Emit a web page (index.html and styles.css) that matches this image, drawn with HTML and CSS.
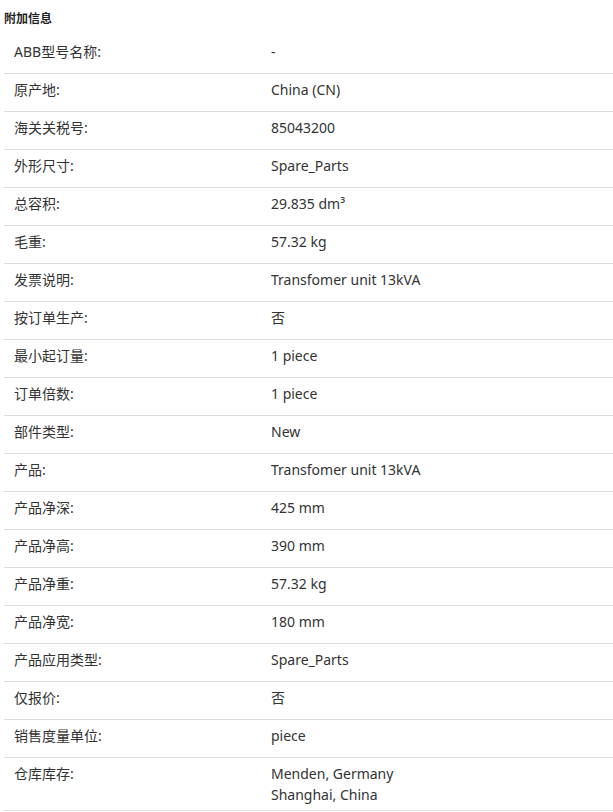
FILE: index.html
```html
<!DOCTYPE html>
<html lang="zh">
<head>
<meta charset="utf-8">
<title>附加信息</title>
<link rel="stylesheet" href="styles.css">
</head>
<body>
<div class="panel">
  <div class="heading">附加信息</div>
  <div class="table">
    <div class="row"><div class="label">ABB型号名称:</div><div class="value">-</div></div>
    <div class="row"><div class="label">原产地:</div><div class="value">China (CN)</div></div>
    <div class="row"><div class="label">海关关税号:</div><div class="value">85043200</div></div>
    <div class="row"><div class="label">外形尺寸:</div><div class="value">Spare_Parts</div></div>
    <div class="row"><div class="label">总容积:</div><div class="value">29.835 dm³</div></div>
    <div class="row"><div class="label">毛重:</div><div class="value">57.32 kg</div></div>
    <div class="row"><div class="label">发票说明:</div><div class="value">Transfomer unit 13kVA</div></div>
    <div class="row"><div class="label">按订单生产:</div><div class="value">否</div></div>
    <div class="row"><div class="label">最小起订量:</div><div class="value">1 piece</div></div>
    <div class="row"><div class="label">订单倍数:</div><div class="value">1 piece</div></div>
    <div class="row"><div class="label">部件类型:</div><div class="value">New</div></div>
    <div class="row"><div class="label">产品:</div><div class="value">Transfomer unit 13kVA</div></div>
    <div class="row"><div class="label">产品净深:</div><div class="value">425 mm</div></div>
    <div class="row"><div class="label">产品净高:</div><div class="value">390 mm</div></div>
    <div class="row"><div class="label">产品净重:</div><div class="value">57.32 kg</div></div>
    <div class="row"><div class="label">产品净宽:</div><div class="value">180 mm</div></div>
    <div class="row"><div class="label">产品应用类型:</div><div class="value">Spare_Parts</div></div>
    <div class="row"><div class="label">仅报价:</div><div class="value">否</div></div>
    <div class="row"><div class="label">销售度量单位:</div><div class="value">piece</div></div>
    <div class="row"><div class="label">仓库库存:</div><div class="value"><div>Menden, Germany</div><div>Shanghai, China</div></div></div>
  </div>
</div>
</body>
</html>
```
FILE: styles.css
```css
html, body {
  margin: 0;
  padding: 0;
  background: #ffffff;
}
body {
  font-family: "Noto Sans", "Noto Sans CJK SC", sans-serif;
  color: #333333;
}
.panel {
  padding: 4px 0 0 4px;
}
.heading {
  font-size: 12px;
  font-weight: bold;
  line-height: 29px;
  color: #1f1f1f;
  margin-bottom: 3px;
}
.row {
  display: grid;
  grid-template-columns: 257px 1fr;
  align-items: start;
  min-height: 38px;
  box-sizing: border-box;
  padding: 5px 0;
  border-bottom: 1px solid #dddddd;
  font-size: 14px;
  line-height: 21px;
}
.label {
  padding-left: 10px;
}
.value {
  padding-left: 10px;
}
```
